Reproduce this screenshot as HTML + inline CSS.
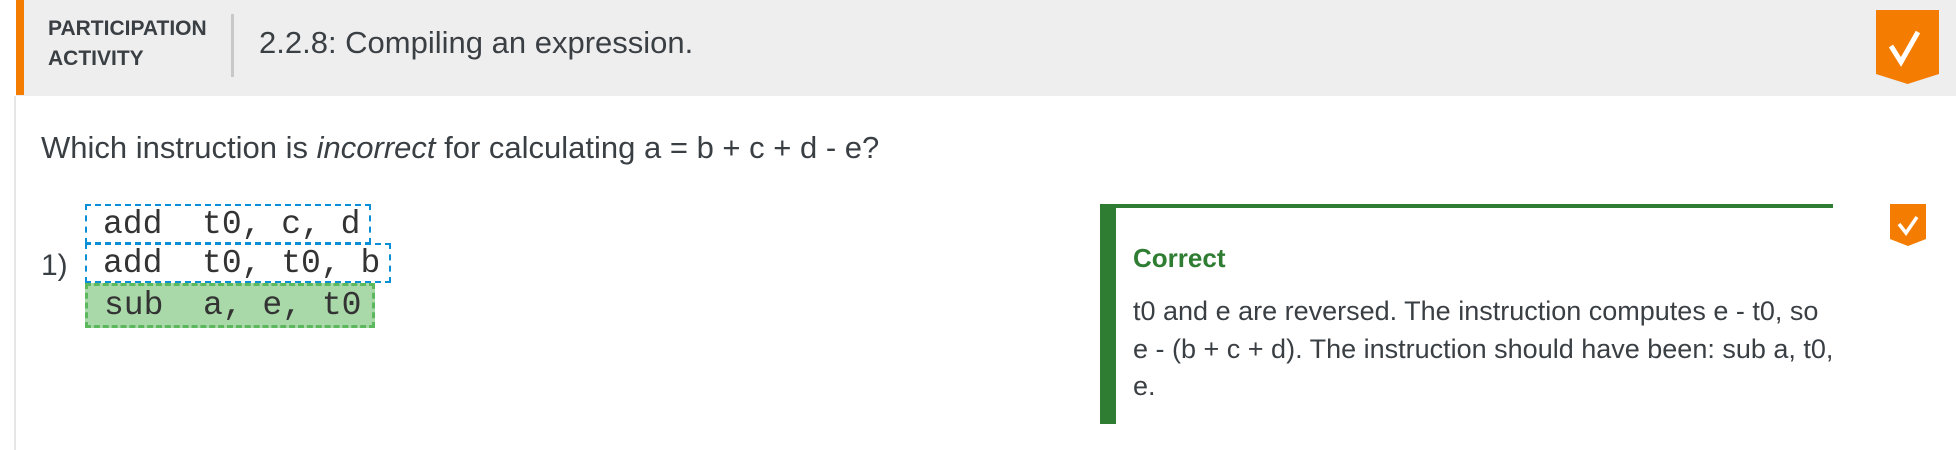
<!DOCTYPE html>
<html><head><style>
body{margin:0;width:1956px;height:450px;background:#fff;position:relative;overflow:hidden;font-family:"Liberation Sans",sans-serif;color:#3a3f44}
.a{position:absolute}
.hdr{left:16px;top:0;width:1940px;height:96px;background:#eeeeee}
.code{font-family:"Liberation Mono",monospace;font-size:33px;color:#333;white-space:pre;position:absolute;box-sizing:border-box;padding-left:16px}
</style></head><body>
<div class="a hdr"></div>
<div class="a" style="left:14px;top:96px;width:2px;height:354px;background:#e6e6e6"></div>
<div class="a" style="left:16px;top:0;width:8px;height:95px;background:#f47c00"></div>
<div class="a" style="left:48px;top:14px;font-size:21px;font-weight:bold;line-height:30px;color:#3a3f44">PARTICIPATION<br>ACTIVITY</div>
<div class="a" style="left:231px;top:14px;width:3px;height:63px;background:#c8c8c8"></div>
<div class="a" style="left:259px;top:25px;font-size:31px;line-height:36px">2.2.8: Compiling an expression.</div>
<svg class="a" style="left:1876px;top:10px" width="63" height="74" viewBox="0 0 63 74"><path d="M0 0H63V64L31.5 74L0 64Z" fill="#f47c00"/><path d="M15 36L25 52L42 22" stroke="#fff" stroke-width="5" fill="none"/></svg>
<div class="a" style="left:41px;top:130px;font-size:31px;line-height:36px">Which instruction is <i>incorrect</i> for calculating a = b + c + d - e?</div>
<div class="a" style="left:41px;top:249px;font-size:30px;line-height:34px">1)</div>
<div class="code" style="left:85px;top:204px;width:286px;height:40px;border:2px dashed #0a8fd6;line-height:38px">add  t0, c, d</div>
<div class="code" style="left:85px;top:243px;width:306px;height:40px;border:2px dashed #0a8fd6;line-height:38px">add  t0, t0, b</div>
<div class="code" style="left:85px;top:283px;width:290px;height:45px;border:3px dashed #5cb85c;background:#a9d8a9;line-height:40px">sub  a, e, t0</div>
<div class="a" style="left:1100px;top:204px;width:733px;height:4px;background:#2e7d32"></div>
<div class="a" style="left:1100px;top:204px;width:16px;height:220px;background:#2e7d32"></div>
<div class="a" style="left:1133px;top:243px;font-size:26px;font-weight:bold;color:#2e7d32;line-height:30px">Correct</div>
<div class="a" style="left:1133px;top:293px;width:730px;font-size:27px;line-height:37.5px">t0 and e are reversed. The instruction computes e - t0, so<br>e - (b + c + d). The instruction should have been: sub a, t0,<br>e.</div>
<svg class="a" style="left:1890px;top:204px" width="36" height="42" viewBox="0 0 36 42"><path d="M0 0H36V35L18 42L0 35Z" fill="#f47c00"/><path d="M9 20L16 29L27 13" stroke="#fff" stroke-width="3.5" fill="none"/></svg>
</body></html>
